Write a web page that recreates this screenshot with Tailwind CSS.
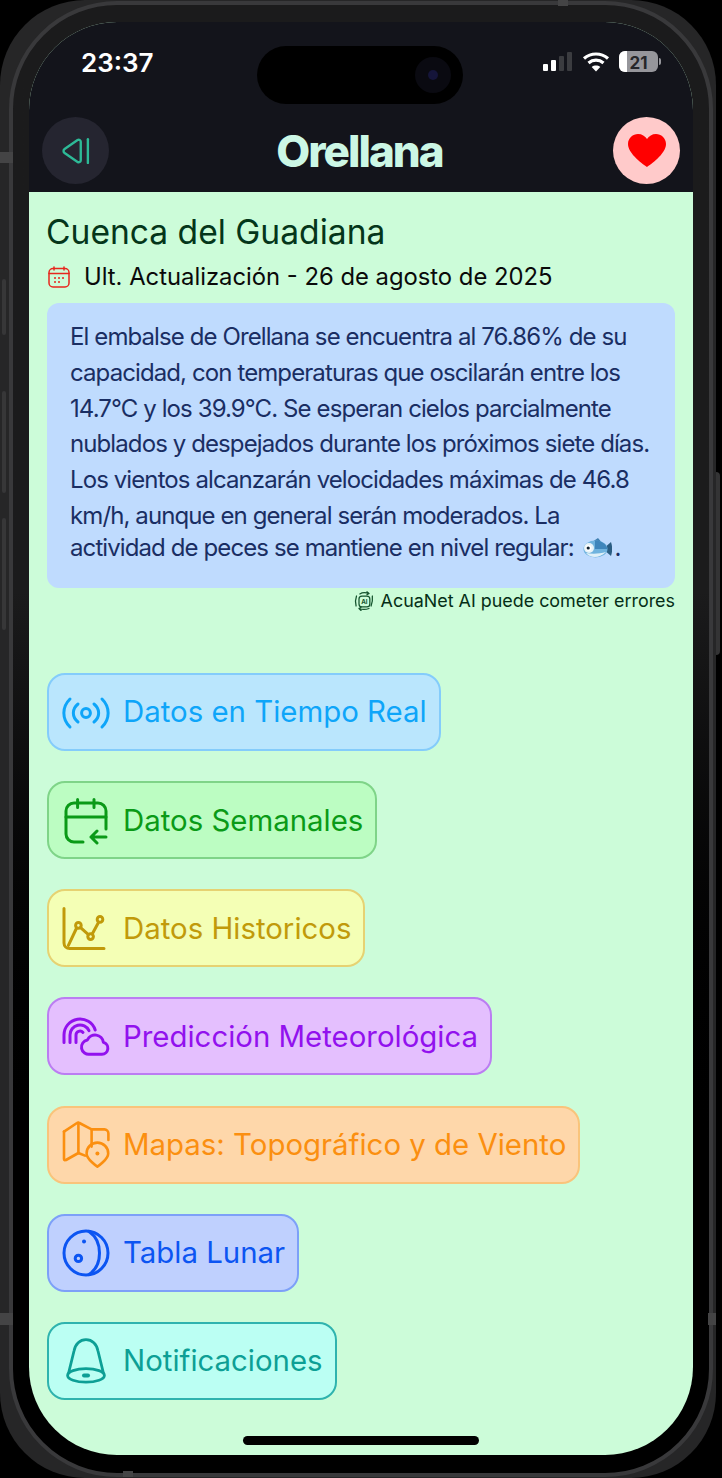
<!DOCTYPE html>
<html lang="en">
  <head>
    <meta charset="UTF-8" />
    <meta name="viewport" content="width=device-width, initial-scale=1.0" />
    <script src="https://cdn.jsdelivr.net/npm/@tailwindcss/browser@4"></script>
    <title>Orellana</title>
  </head>
  <body class="bg-black font-['Inter',sans-serif]">
    <div class="relative w-[722px] h-[1478px] pt-px pl-[9px] overflow-hidden">
      <!-- phone backing + side buttons -->
      <div class="absolute left-0 top-0 w-[716px] h-[1478px] rounded-[85px] bg-[#262627]"></div>
      <div class="absolute left-[2px] top-[279px] w-[4px] h-[56px] rounded-sm bg-[#373738]"></div>
      <div class="absolute left-[2px] top-[391px] w-[4px] h-[102px] rounded-sm bg-[#373738]"></div>
      <div class="absolute left-[2px] top-[518px] w-[4px] h-[112px] rounded-sm bg-[#373738]"></div>
      <div class="absolute left-[716px] top-[472px] w-[4px] h-[183px] rounded-r-sm bg-[#343435]"></div>

      <!-- phone -->
      <div class="relative w-[704px] h-[1476px] rounded-[108px] border-4 border-[#39393b] bg-linear-to-b from-[#1b1b1c] from-40% to-black to-80% pt-[17px] pl-[16px]">
        <div class="w-[664px] h-[1433px] rounded-[88px] overflow-hidden bg-[#ccfcd9] relative">
          <!-- dark top -->
          <div class="h-[170px] bg-[#13141b]">
            <div class="flex items-start justify-between pl-[52px] pr-[32px] pt-[26px] h-[96px]">
              <span class="text-[26px] leading-[30px] font-semibold text-white">23:37</span>
              <div class="flex items-center gap-[9px] pt-[3px]">
                <svg width="30" height="21" viewBox="0 0 30 21"><rect x="0" y="13" width="5" height="7" rx="1" fill="#fff"/><rect x="8" y="9" width="5" height="11" rx="1" fill="#fff"/><rect x="16" y="5" width="5" height="15" rx="1" fill="#3b3c40"/><rect x="24" y="1" width="5" height="19" rx="1" fill="#3b3c40"/></svg>
                <svg width="28" height="21" viewBox="0 0 28 21" fill="none" stroke="#fff" stroke-width="3.2"><path d="M2 7.500c7-6 17-6 24 0"/><path d="M6.500 12c4.500-3.800 10.500-3.800 15 0"/><path d="M14 20.500l-4.300-4.600c2.500-1.800 6.100-1.800 8.600 0z" fill="#fff" stroke="none"/></svg>
                <div class="flex items-center">
                  <div class="relative w-[39px] h-[21px] rounded-[6px] bg-[#96969b] overflow-hidden text-center">
                    <div class="absolute left-0 top-0 w-[8px] h-full bg-white"></div>
                    <span class="relative text-[17px] leading-[21px] font-bold text-[#26262a]">21</span>
                  </div>
                  <div class="w-[2px] h-[7px] ml-px rounded-r-sm bg-[#96969b]"></div>
                </div>
              </div>
            </div>
            <div class="flex items-center justify-between px-[13px] -mt-px">
              <button class="w-[67px] h-[67px] rounded-full bg-[#252530] flex items-center justify-center">
                <svg width="38" height="38" viewBox="0 0 24 24" fill="none" stroke="#2dba97" stroke-width="1.500" stroke-linecap="round" stroke-linejoin="round"><path d="M19.500 4.500v15"/><path d="M15 6.200v11.600c0 1.100-1.100 1.700-2 1.100L4.800 13.300c-.9-.6-.9-2 0-2.600L13 5.100c.9-.6 2 0 2 1.100z"/></svg>
              </button>
              <h1 class="mr-[3px] text-[44px] leading-[50px] font-extrabold text-[#ccf7e5] tracking-[-2px]">Orellana</h1>
              <button class="w-[67px] h-[67px] rounded-full bg-[#ffcaca] flex items-center justify-center">
                <svg width="38" height="34" viewBox="0 0 38 34"><path d="M19 33 C 16 31 0 20 0 10 C 0 4 5 0 10 0 C 14 0 17 2 19 5 C 21 2 24 0 28 0 C 33 0 38 4 38 10 C 38 20 22 31 19 33 Z" fill="#ff0000"/></svg>
              </button>
            </div>
          </div>

          <!-- content -->
          <div class="px-[18px] pt-[20px]">
            <h2 class="-ml-px text-[33.600px] leading-[40px] text-[#04361a]">Cuenca del Guadiana</h2>
            <div class="flex items-center gap-[13px] mt-[11px] h-[28px]">
              <svg width="24" height="24" viewBox="0 0 24 24" fill="none" stroke="#e7271e" stroke-width="1.500" stroke-linecap="round" stroke-linejoin="round"><rect x="2" y="3.500" width="20" height="18.500" rx="4"/><path d="M2 8.500h20M7 2v3M17 2v3"/><path d="M8 13h.01M12 13h.01M16 13h.01M8 17h.01M12 17h.01" stroke-width="2"/></svg>
              <p class="text-[23.800px] leading-[28px] text-[#0a0a0a]">Ult. Actualización - 26 de agosto de 2025</p>
            </div>
            <div class="mt-[12px] w-[628px] h-[285px] rounded-[12px] bg-[#bfdbfe] pl-[23px] pt-[16px] text-[24px] tracking-[-0.9px] leading-[35.800px] text-[#1a2e63]">
              <p>El embalse de Orellana se encuentra al 76.86% de su</p>
              <p>capacidad, con temperaturas que oscilarán entre los</p>
              <p>14.7°C y los 39.9°C. Se esperan cielos parcialmente</p>
              <p>nublados y despejados durante los próximos siete días.</p>
              <p>Los vientos alcanzarán velocidades máximas de 46.8</p>
              <p>km/h, aunque en general serán moderados. La</p>
              <p class="-mt-[4px]">actividad de peces se mantiene en nivel regular:
                <svg class="inline-block align-[-5px] ml-[3px] mr-[3px]" width="29" height="24" viewBox="0 0 29 24"><path d="M20 12l8-7c1.500 4 1.500 10 0 14z" fill="#2a5d82"/><path d="M9 5l6-4 5 6z" fill="#3f7fb0"/><ellipse cx="12.500" cy="12" rx="12" ry="8.500" fill="#6fb3de"/><path d="M12 3.600c6 0 11 3 12.500 8.400H12z" fill="#3f86bb"/><path d="M3 16c4 5 13 6 20-1-7 2-14 2-20 1z" fill="#dff0f8"/><circle cx="6" cy="11" r="5" fill="#e8f3f8"/><circle cx="5.500" cy="11" r="3" fill="#fff"/><circle cx="5.200" cy="11" r="1.600" fill="#10202f"/></svg>.</p>
            </div>
            <div class="flex items-center justify-end gap-[7px] w-[628px] h-[26px]">
              <svg width="20" height="20" viewBox="0 0 24 24" fill="none" stroke="#14532d" stroke-width="1.500" stroke-linecap="round" stroke-linejoin="round"><rect x="6" y="6" width="13" height="13" rx="3.500"/><text x="12.500" y="15.500" text-anchor="middle" font-size="7.500" font-weight="700" fill="#14532d" stroke="none">AI</text><path d="M7 3.500C10 1.500 14 1.500 18 3M15.500 1l2.500 2-2.500 1.500"/><path d="M22 6c.500 4 0 8-1.500 12"/><path d="M18 21c-4 1.500-8 1.500-12 0M8.500 23.500 6 21l2.500-1.500"/><path d="M2.500 18C1.500 14 1.500 10 3 6"/></svg>
              <span class="text-[17.900px] leading-[24px] text-[#052e16]">AcuaNet AI puede cometer errores</span>
            </div>

            <nav class="flex flex-col items-start gap-[30.170px] mt-[59px]">
              <a class="flex items-center gap-[13px] h-[78px] pl-[13px] pr-[12px] pt-[1px] rounded-[18px] border-2 border-[#84ccfb] bg-[#bae6fd] text-[#0ea5f9] text-[29.400px]">
                <svg width="48" height="48" viewBox="0 0 24 24" fill="none" stroke="currentColor" stroke-width="1.500" stroke-linecap="round"><circle cx="12" cy="12" r="2.200"/><path d="M8 7.500C4.900 10 4.900 14 8 16.500M16 7.500c3.100 2.500 3.100 6.500 0 9M4 5C-.1 9-.1 15 4 19M20 5c4.100 4 4.100 10 0 14"/></svg>
                Datos en Tiempo Real
              </a>
              <a class="flex items-center gap-[13px] h-[78px] pl-[13px] pr-[12px] pt-[1px] rounded-[18px] border-2 border-[#7fd488] bg-[#bcfdc2] text-[#0a9a17] text-[29.400px]">
                <svg width="48" height="48" viewBox="0 0 24 24" fill="none" stroke="currentColor" stroke-width="1.500" stroke-linecap="round" stroke-linejoin="round"><path d="M10.500 22.500H6a4 4 0 0 1-4-4V7a4 4 0 0 1 4-4h12a4 4 0 0 1 4 4v9"/><path d="M2 10h20M7.800 1.200v4M16 1.200v4"/><path d="M22 20h-7.500M17.500 17l-3 3 3 3"/></svg>
                Datos Semanales
              </a>
              <a class="flex items-center gap-[13px] h-[78px] pl-[13px] pr-[12px] pt-[1px] rounded-[18px] border-2 border-[#e6d272] bg-[#f4ffb5] text-[#c19a0a] text-[29.400px]">
                <svg width="48" height="48" viewBox="0 0 24 24" fill="none" stroke="currentColor" stroke-width="1.500" stroke-linecap="round" stroke-linejoin="round"><path d="M1 1.800V19a2.800 2.800 0 0 0 2.800 2.800H21"/><path d="M3.200 20.200L7.300 11.500M9.300 11.300l3.900 3.500M15.100 14.500l3-5.500"/><circle cx="8.200" cy="10.200" r="1.400"/><circle cx="14.300" cy="15.800" r="1.400"/><circle cx="19" cy="7.200" r="1.400"/></svg>
                Datos Historicos
              </a>
              <a class="flex items-center gap-[13px] h-[78px] pl-[13px] pr-[12px] pt-[1px] rounded-[18px] border-2 border-[#bb7df2] bg-[#e4bffe] text-[#9211ee] text-[29.400px]">
                <svg width="48" height="48" viewBox="0 0 24 24" fill="none" stroke="currentColor" stroke-width="1.500" stroke-linecap="round" stroke-linejoin="round"><path d="M1 14.800V11a8 8 0 0 1 15.600-2.500"/><path d="M4 14.800V11a5 5 0 0 1 9.500-2.200"/><path d="M7 14.800V11a2 2 0 0 1 3.500-1.300"/><path d="M14 20.600h6a3 3 0 0 0 .7-5.900 4.200 4.200 0 0 0-8-1.200 3.600 3.600 0 0 0 1.300 7.100z"/></svg>
                Predicción Meteorológica
              </a>
              <a class="flex items-center gap-[13px] h-[78px] pl-[13px] pr-[12px] pt-[1px] rounded-[18px] border-2 border-[#f9c47b] bg-[#fed7aa] text-[#fb8f10] text-[29.400px]">
                <svg width="48" height="48" viewBox="0 0 24 24" fill="none" stroke="currentColor" stroke-width="1.300" stroke-linecap="round" stroke-linejoin="round"><path d="M1 5.300V19c0 .6.500.8 1 .5l6.200-3.500 3.300 1.300"/><path d="M1 5.300L7.500 1c.4-.3.800-.3 1.200 0l6.100 3.200h6.400a2 2 0 0 1 2 2v3.300"/><path d="M8.200 1v15M14.800 4.200v8.600"/><path d="M17.700 22.800s-5.400-3.600-5.400-6.600a5.400 5.400 0 0 1 10.800 0c0 3-5.400 6.600-5.400 6.600z"/><path d="M17.700 16.200h.01" stroke-width="2"/></svg>
                Mapas: Topográfico y de Viento
              </a>
              <a class="flex items-center gap-[13px] h-[78px] pl-[13px] pr-[12px] pt-[1px] rounded-[18px] border-2 border-[#7da0f8] bg-[#bfd0fe] text-[#0c55f2] text-[29.400px]">
                <svg width="48" height="48" viewBox="0 0 24 24" fill="none" stroke="currentColor" stroke-width="1.500" stroke-linecap="round" stroke-linejoin="round"><circle cx="12" cy="12" r="11"/><path d="M13.500 1.200c7 4.800 7 16.800 0 21.600"/><circle cx="8.200" cy="14.700" r="1.600"/><path d="M11 6.300h.01" stroke-width="2"/></svg>
                Tabla Lunar
              </a>
              <a class="flex items-center gap-[13px] h-[78px] pl-[13px] pr-[12px] pt-[1px] rounded-[18px] border-2 border-[#2fb3ae] bg-[#bbfff3] text-[#0d9f95] text-[29.400px]">
                <svg width="48" height="48" viewBox="0 0 24 24" fill="none" stroke="currentColor" stroke-width="1.400" stroke-linecap="round" stroke-linejoin="round"><path d="M3.300 18L6 7c.6-3.500 3-5.700 6-5.700s5.400 2.200 6 5.700l2.700 11"/><ellipse cx="12" cy="19.200" rx="9.200" ry="3.400"/><path d="M11 19.200h2" stroke-width="2"/></svg>
                Notificaciones
              </a>
            </nav>
          </div>

          <!-- home bar -->
          <div class="absolute left-[214px] bottom-[10px] w-[236px] h-[9px] rounded-full bg-black"></div>
        </div>

        <!-- dynamic island -->
        <div class="absolute left-[244px] top-[41px] w-[206px] h-[58px] rounded-full bg-black">
          <div class="absolute right-[12px] top-[11px] w-[36px] h-[36px] rounded-full bg-[#0a0a11] flex items-center justify-center">
            <div class="w-[10px] h-[10px] rounded-full bg-[#15153a]"></div>
          </div>
        </div>
      </div>

      <!-- antenna bands -->
      <div class="absolute left-0 top-[152px] w-[13px] h-[11px] bg-[#444445]"></div>
      <div class="absolute left-0 top-[1313px] w-[13px] h-[12px] bg-[#444445]"></div>
      <div class="absolute left-[708px] top-[1313px] w-[8px] h-[12px] bg-[#444445]"></div>
      <div class="absolute left-[558px] top-0 w-[10px] h-[6px] bg-[#444445]"></div>
      <div class="absolute left-[123px] top-[1471px] w-[10px] h-[6px] bg-[#444445]"></div>
    </div>
  </body>
</html>
